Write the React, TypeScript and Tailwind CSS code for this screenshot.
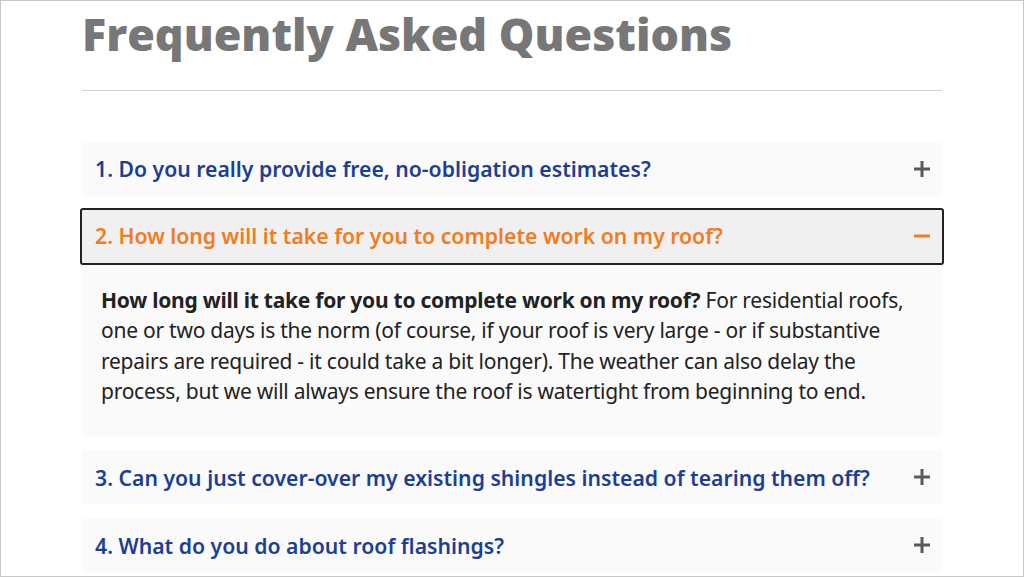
import { useState } from 'react';

interface FaqItem {
  q: string;
  a: string;
}

const faqs: FaqItem[] = [
  {
    q: 'Do you really provide free, no-obligation estimates?',
    a: 'Yes. We will come out, inspect your roof and give you a written estimate at no cost and with no obligation.',
  },
  {
    q: 'How long will it take for you to complete work on my roof?',
    a: 'For residential roofs, one or two days is the norm (of course, if your roof is very large - or if substantive repairs are required - it could take a bit longer). The weather can also delay the process, but we will always ensure the roof is watertight from beginning to end.',
  },
  {
    q: 'Can you just cover-over my existing shingles instead of tearing them off?',
    a: '',
  },
  {
    q: 'What do you do about roof flashings?',
    a: '',
  },
];

function PlusIcon() {
  return (
    <svg width="16" height="16" viewBox="0 0 16 16" className="shrink-0">
      <path d="M8 0v16M0 8h16" stroke="#5a5a5a" strokeWidth="3" />
    </svg>
  );
}

function MinusIcon() {
  return (
    <svg width="16" height="16" viewBox="0 0 16 16" className="shrink-0">
      <path d="M0 8h16" stroke="#f47b20" strokeWidth="3" />
    </svg>
  );
}

export default function App() {
  const [open, setOpen] = useState(1);

  return (
    <div className="w-[1024px] h-[577px] overflow-hidden bg-white border border-[#c8c8c8] font-['Noto_Sans',sans-serif]">
      <div className="ml-[81px] w-[860px]">
        <h1 className="mt-[11px] text-[44.8px] leading-none font-extrabold text-[#777777] font-['Open_Sans',sans-serif]">
          Frequently Asked Questions
        </h1>
        <div className="mt-[33px] h-px bg-[#d0d0d0]" />

        <div className="mt-[51px] flex flex-col">
          {faqs.map((f, i) => {
            const active = i === open;
            return (
              <div key={i} className={i === 0 ? '' : active ? 'mt-[12px]' : 'mt-[14px]'}>
                <button
                  onClick={() => setOpen(active ? -1 : i)}
                  className={
                    active
                      ? 'w-[864px] -mx-[2px] h-[57px] flex items-center justify-between pl-[13px] pr-[12px] bg-[#f0f0f0] border-2 border-[#222] rounded-[3px] text-left'
                      : 'w-full h-[54px] flex items-center justify-between pl-[13px] pr-[12px] bg-[#fafafa] text-left'
                  }
                >
                  <span
                    className={
                      'text-[21.2px] font-semibold ' +
                      (active ? 'text-[#f47b20]' : 'text-[#1c3f95]')
                    }
                  >
                    {i + 1}. {f.q}
                  </span>
                  {active ? <MinusIcon /> : <PlusIcon />}
                </button>
                {active && (
                  <div className="bg-[#fafafa] pl-[19px] pr-[16px] pt-[20px] pb-[30px] text-[21px] leading-[30.4px] tracking-[-0.25px] text-[#222]">
                    <strong className="font-bold">{f.q}</strong> {f.a}
                  </div>
                )}
              </div>
            );
          })}
        </div>
      </div>
    </div>
  );
}
